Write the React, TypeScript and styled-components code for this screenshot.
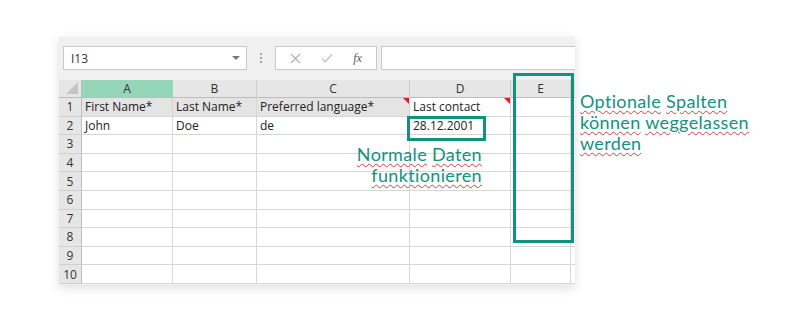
import React from 'react'
import styled, { createGlobalStyle } from 'styled-components'

const GlobalStyle = createGlobalStyle`
  html, body {
    margin: 0;
    padding: 0;
    background: #ffffff;
  }
  * {
    box-sizing: border-box;
  }
`

const teal = '#13917f'

const Page = styled.div`
  display: flex;
  align-items: flex-start;
  width: 809px;
  height: 317px;
  padding: 37px 0 0 59px;
  font-family: 'Open Sans', 'Liberation Sans', sans-serif;
`

const Panel = styled.div`
  position: relative;
  display: flex;
  flex-direction: column;
  width: 516px;
  height: 248px;
  background: #f0f0f0;
  box-shadow: 0 3px 10px rgba(0, 0, 0, 0.13);
  overflow: hidden;
`

const Toolbar = styled.div`
  display: flex;
  align-items: center;
  height: 43px;
  padding: 9px 0 10px 4px;
`

const NameBox = styled.div`
  display: flex;
  align-items: center;
  justify-content: space-between;
  width: 184px;
  height: 24px;
  padding: 0 6px 0 7px;
  background: #fff;
  border: 1px solid #c8c8c8;
  color: #333;
  font-size: 12px;
`

const Caret = styled.span`
  width: 0;
  height: 0;
  border-left: 4px solid transparent;
  border-right: 4px solid transparent;
  border-top: 4px solid #777;
`

const Dots = styled.div`
  display: flex;
  flex-direction: column;
  gap: 2px;
  margin: 0 13px 0 13px;
  span {
    width: 2px;
    height: 2px;
    background: #a8a8a8;
  }
`

const ButtonBox = styled.div`
  display: flex;
  align-items: center;
  justify-content: space-around;
  width: 102px;
  height: 24px;
  padding: 0 4px;
  background: #fff;
  border: 1px solid #c8c8c8;
`

const Fx = styled.span`
  font-family: 'Liberation Serif', serif;
  font-style: italic;
  font-size: 12px;
  color: #555;
`

const FormulaInput = styled.div`
  flex: 1;
  height: 24px;
  margin-left: 4px;
  background: #fff;
  border: 1px solid #c8c8c8;
  border-right: none;
`

const Grid = styled.div`
  display: grid;
  grid-template-columns: 23px 91px 84px 153px 101px 60px 1fr;
  grid-template-rows: 18px repeat(10, 18.6px);
  background: #fff;
  font-size: 12px;
  color: #222;
`

const Cell = styled.div<{ $gray?: boolean }>`
  position: relative;
  display: flex;
  align-items: center;
  padding: 0 3px;
  overflow: hidden;
  white-space: nowrap;
  background: ${({ $gray }) => ($gray ? '#e4e4e4' : '#fff')};
  border-right: 1px solid #d6d6d6;
  border-bottom: 1px solid #d6d6d6;
`

const ColHead = styled.div<{ $active?: boolean }>`
  display: flex;
  align-items: center;
  justify-content: center;
  background: ${({ $active }) => ($active ? '#95d6b8' : '#e6e6e6')};
  border-right: 1px solid ${({ $active }) => ($active ? '#95d6b8' : '#cfcfcf')};
  border-bottom: 1px solid #bdbdbd;
  color: #333;
  font-size: 12px;
`

const Corner = styled.div`
  display: flex;
  align-items: flex-end;
  justify-content: flex-end;
  padding: 0 3px 3px 0;
  background: #e6e6e6;
  border-right: 1px solid #bdbdbd;
  border-bottom: 1px solid #bdbdbd;
  span {
    width: 0;
    height: 0;
    border-left: 12px solid transparent;
    border-bottom: 12px solid #c4c4c4;
  }
`

const RowHead = styled.div`
  display: flex;
  align-items: center;
  justify-content: center;
  background: #e6e6e6;
  border-right: 1px solid #bdbdbd;
  border-bottom: 1px solid #d0d0d0;
  color: #333;
  font-size: 12px;
`

const CommentMark = styled.span`
  position: absolute;
  top: 0;
  right: 0;
  width: 0;
  height: 0;
  border-left: 6px solid transparent;
  border-top: 6px solid #e8191a;
`

const Highlight = styled.div<{ $left: number; $top: number; $w: number; $h: number }>`
  position: absolute;
  left: ${({ $left }) => $left}px;
  top: ${({ $top }) => $top}px;
  width: ${({ $w }) => $w}px;
  height: ${({ $h }) => $h}px;
  border: 3px solid ${teal};
`

const Note = styled.div`
  font-family: Lato, 'Open Sans', sans-serif;
  font-size: 18px;
  letter-spacing: 0.35px;
  line-height: 21px;
  color: ${teal};
  span {
    text-decoration: underline wavy #e5393b;
    text-decoration-thickness: 1px;
    text-underline-offset: 2px;
  }
`

const GridNote = styled(Note)`
  position: absolute;
  right: 93px;
  top: 107px;
  text-align: right;
`

const SideNote = styled(Note)`
  margin: 54px 0 0 5px;
`

const columns = ['A', 'B', 'C', 'D', 'E']

type Row = { values: string[]; gray?: boolean; marks?: number[] }

const rows: Row[] = [
  { values: ['First Name*', 'Last Name*', 'Preferred language*', 'Last contact', ''], gray: true, marks: [2, 3] },
  { values: ['John', 'Doe', 'de', '28.12.2001', ''] },
]

const Words = ({ text }: { text: string }) => (
  <div>
    {text.split(' ').map((w, i) => (
      <React.Fragment key={i}>
        {i > 0 && ' '}
        <span>{w}</span>
      </React.Fragment>
    ))}
  </div>
)

export default function App() {
  return (
    <Page>
      <GlobalStyle />
      <Panel>
        <Toolbar>
          <NameBox>
            I13
            <Caret />
          </NameBox>
          <Dots>
            <span />
            <span />
            <span />
          </Dots>
          <ButtonBox>
            <svg width="11" height="11" viewBox="0 0 11 11">
              <path d="M1 1 L10 10 M10 1 L1 10" stroke="#b4b4b4" strokeWidth="1.3" />
            </svg>
            <svg width="12" height="10" viewBox="0 0 12 10">
              <path d="M1 5.5 L4.3 8.8 L11 1.5" stroke="#c4c4c4" strokeWidth="1.4" fill="none" />
            </svg>
            <Fx>fx</Fx>
          </ButtonBox>
          <FormulaInput />
        </Toolbar>
        <Grid>
          <Corner>
            <span />
          </Corner>
          {columns.map((c, i) => (
            <ColHead key={c} $active={i === 0}>
              {c}
            </ColHead>
          ))}
          <ColHead />
          {Array.from({ length: 10 }, (_, r) => {
            const row = rows[r]
            return (
              <React.Fragment key={r}>
                <RowHead>{r + 1}</RowHead>
                {columns.map((c, ci) => (
                  <Cell key={c} $gray={row?.gray && ci < 3}>
                    {row?.values[ci]}
                    {row?.marks?.includes(ci) && <CommentMark />}
                  </Cell>
                ))}
                <Cell />
              </React.Fragment>
            )
          })}
        </Grid>
        <Highlight $left={348} $top={79} $w={79} $h={25} />
        <Highlight $left={454} $top={36} $w={61} $h={170} />
        <GridNote>
          <Words text="Normale Daten" />
          <Words text="funktionieren" />
        </GridNote>
      </Panel>
      <SideNote>
        <Words text="Optionale Spalten" />
        <Words text="können weggelassen" />
        <Words text="werden" />
      </SideNote>
    </Page>
  )
}
